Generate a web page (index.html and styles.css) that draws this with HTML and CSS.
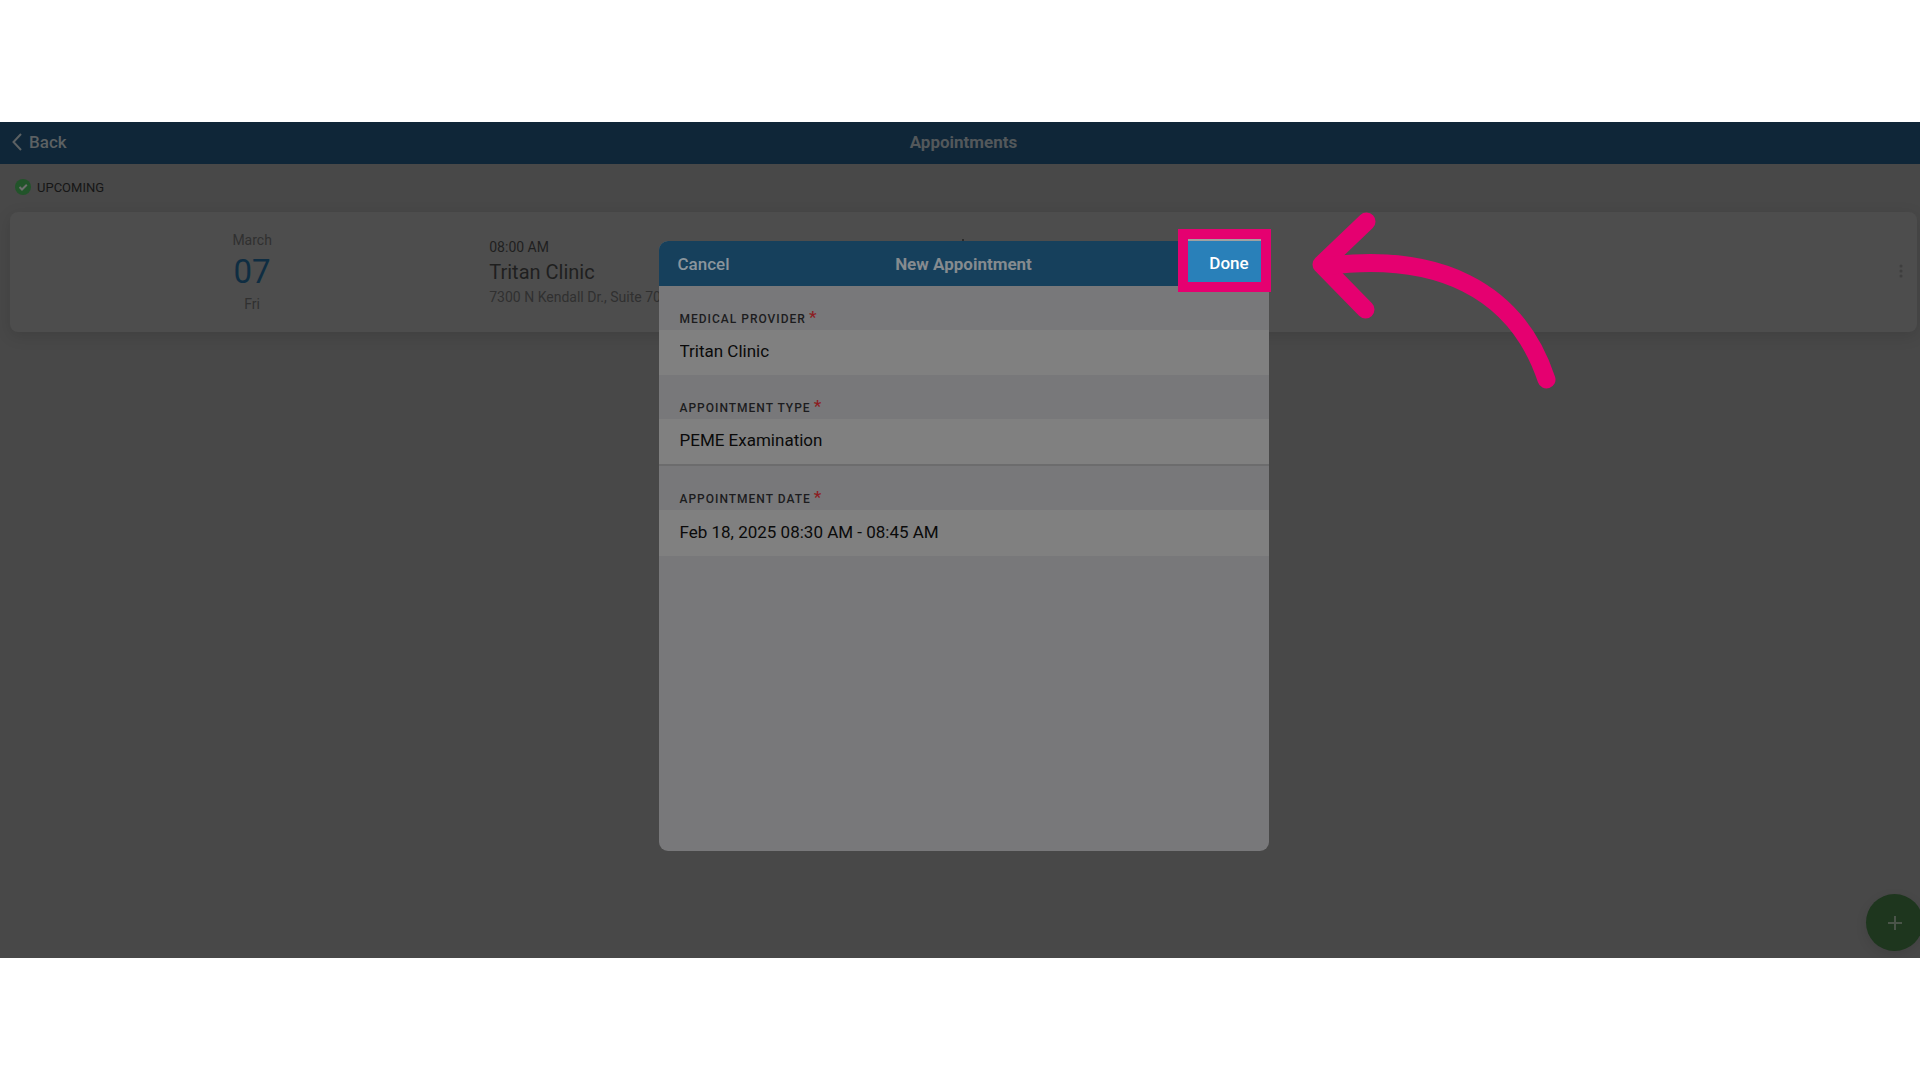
FILE: index.html
```html
<!DOCTYPE html>
<html lang="en">
<head>
  <meta charset="UTF-8" />
  <meta name="viewport" content="width=device-width, initial-scale=1.0" />
  <title>Appointments</title>
  <link rel="stylesheet" href="styles.css">
</head>
<body>

<div class="stage">
  <div class="app">

    <!-- Top bar -->
    <header class="navbar">
      <a href="#" class="back">
        <svg width="10" height="18" viewBox="0 0 10 18" fill="none" stroke="currentColor" stroke-width="2"><path d="M9 1 1.5 9 9 17" /></svg>
        Back
      </a>
      <h1>Appointments</h1>
    </header>

    <main class="content">
      <h2 class="section-title">
        <svg width="16" height="16" viewBox="0 0 16 16"><circle cx="8" cy="8" r="8" fill="#22542a" /><path d="M4.5 8 7 10.5 11.8 5.8" fill="none" stroke="#6e6e6e" stroke-width="2" /></svg>
        UPCOMING
      </h2>

      <article class="card">
        <div class="date">
          <span>March</span>
          <strong>07</strong>
          <span>Fri</span>
        </div>
        <div class="details">
          <span class="time">08:00 AM</span>
          <span class="clinic">Tritan Clinic</span>
          <span class="address">7300 N Kendall Dr., Suite 70</span>
        </div>
        <button type="button" class="more" aria-label="More options">
          <svg width="4" height="14" viewBox="0 0 4 14" fill="currentColor"><circle cx="2" cy="2" r="1.5" /><circle cx="2" cy="7" r="1.5" /><circle cx="2" cy="12" r="1.5" /></svg>
        </button>
      </article>
    </main>

    <button type="button" class="fab" aria-label="Add appointment">
      <svg width="14" height="14" viewBox="0 0 14 14" stroke="currentColor" stroke-width="2"><path d="M7 0v14M0 7h14" /></svg>
    </button>

    <!-- New appointment dialog -->
    <div class="overlay">
      <form class="modal">
        <div class="modal-header">
          <button type="button" class="cancel">Cancel</button>
          <h2>New Appointment</h2>
          <button type="submit" class="done">Done</button>
        </div>

        <div class="field">
          <label for="provider">Medical Provider<sup>*</sup></label>
          <input type="text" id="provider" value="Tritan Clinic" />
        </div>
        <div class="field field-type">
          <label for="type">Appointment Type<sup>*</sup></label>
          <input type="text" id="type" value="PEME Examination" />
        </div>
        <div class="field field-date">
          <label for="date">Appointment Date<sup>*</sup></label>
          <input type="text" id="date" value="Feb 18, 2025 08:30 AM - 08:45 AM" />
        </div>

        <!-- Pointer to the Done button -->
        <svg class="arrow" width="244" height="178" viewBox="0 0 244 178" fill="none" stroke="#e50070" stroke-width="18" stroke-linecap="round" stroke-linejoin="round">
          <path d="M54.5 9.5 9.5 52.5 53.5 97.5" />
          <path d="M14 54C124 40 204 76 234.5 167.5" />
        </svg>
      </form>
    </div>

  </div>
</div>

</body>
</html>
```

FILE: styles.css
```css
*, *::before, *::after { box-sizing: border-box; margin: 0; padding: 0; }

:root {
  --navy:       #0f2638;
  --blue:       #16405c;
  --bright:     #2980b9;
  --page:       #484848;
  --card:       #4d4d4d;
  --sheet:      #78787a;
  --row:        #808080;
  --muted:      #303030;
  --pink:       #e50070;
}

body {
  font-family: Roboto, sans-serif;
  background: #ffffff;
  min-height: 100vh;
  display: flex;
  flex-direction: column;
  justify-content: center;
}

button {
  font-family: inherit;
  border: none;
  background: none;
  cursor: pointer;
}

.stage {
  overflow: hidden;
}

/* runs slightly past the right edge of the window */
.app {
  position: relative;
  margin-right: -7px;
  min-height: 836px;
  background: var(--page);
}

.navbar {
  display: grid;
  grid-template-columns: 1fr auto 1fr;
  align-items: center;
  height: 42px;
  padding: 0 12px 2px;
  background: var(--navy);
  color: #5c6163;
}

.navbar h1 {
  font-size: 17px;
  font-weight: 700;
  color: #53585b;
}

.back {
  display: flex;
  align-items: center;
  gap: 7px;
  font-size: 17px;
  font-weight: 500;
  color: inherit;
  text-decoration: none;
}

.content {
  padding: 0 10px;
}

.section-title {
  display: flex;
  align-items: center;
  gap: 6px;
  height: 48px;
  padding: 0 0 2px 5px;
  font-size: 13px;
  font-weight: 400;
  color: #161616;
}

.card {
  position: relative;
  display: grid;
  grid-template-columns: 25% 1fr;
  align-items: center;
  height: 120px;
  padding: 0 5px;
  border-radius: 8px;
  background: var(--card);
  box-shadow: 0 4px 16px rgba(0, 0, 0, .12);
}

.date {
  display: flex;
  flex-direction: column;
  align-items: center;
  font-size: 14px;
  line-height: 24px;
  color: var(--muted);
}

.date strong {
  font-size: 33px;
  font-weight: 400;
  line-height: 40px;
  color: #0f2d42;
}

.details {
  display: flex;
  flex-direction: column;
  font-size: 14px;
  line-height: 25px;
  color: #1f1f1f;
}

.clinic {
  font-size: 20px;
}

.address {
  color: var(--muted);
}

.more {
  position: absolute;
  top: 48px;
  right: 8px;
  width: 16px;
  height: 24px;
  color: #3e3e3e;
}

.fab {
  position: absolute;
  right: 4px;
  bottom: 7px;
  display: flex;
  align-items: center;
  justify-content: center;
  width: 57px;
  height: 57px;
  border-radius: 50%;
  background: #1e361e;
  color: #4a5449;
  box-shadow: 0 4px 12px rgba(0, 0, 0, .1);
}

.overlay {
  position: absolute;
  inset: 0;
  display: flex;
  align-items: center;
  justify-content: center;
  padding-top: 12px;
}

.modal {
  position: relative;
  width: 610px;
  min-height: 610px;
  border-radius: 9px;
  background: var(--sheet);
}

/* speck of the card text left showing above the dialog */
.modal::before {
  content: "";
  position: absolute;
  top: -2px;
  left: 50%;
  width: 2px;
  height: 2px;
  margin-left: -2px;
  background: #2c2c2c;
}

.modal-header {
  display: grid;
  grid-template-columns: 1fr auto 1fr;
  align-items: center;
  height: 45px;
  padding: 0 19px;
  border-radius: 9px 9px 0 0;
  background: var(--blue);
}

.modal-header h2 {
  font-size: 17px;
  font-weight: 700;
  color: #858b8f;
}

.cancel {
  justify-self: start;
  font-size: 17px;
  font-weight: 500;
  color: #8a959c;
}

.done {
  position: absolute;
  top: -2px;
  right: 8px;
  width: 73px;
  height: 43px;
  padding: 2px 0 0 10px;
  border-top: 2px solid #a0a0a0;
  background: var(--bright);
  box-shadow: 0 0 0 10px var(--pink);
  font-size: 17px;
  font-weight: 500;
  color: #ffffff;
}

.field label {
  display: flex;
  align-items: flex-end;
  gap: 3px;
  height: 44px;
  padding: 0 21px 4px;
  font-size: 12px;
  font-weight: 500;
  line-height: 14px;
  letter-spacing: 1px;
  text-transform: uppercase;
  color: #1c1c1e;
}

.field sup {
  font-size: 17px;
  line-height: 18px;
  color: #8c1d22;
}

.field input {
  display: block;
  width: 100%;
  height: 45px;
  padding: 0 21px 3px;
  border: none;
  outline: none;
  background: var(--row);
  font-family: inherit;
  font-size: 17px;
  color: #0a0a0a;
}

.field-type input {
  box-shadow: 0 2px 0 #6c6c6d;
}

.field-date label,
.field-date input {
  height: 46px;
}

.arrow {
  position: absolute;
  top: -29px;
  left: calc(100% + 43px);
}
```
